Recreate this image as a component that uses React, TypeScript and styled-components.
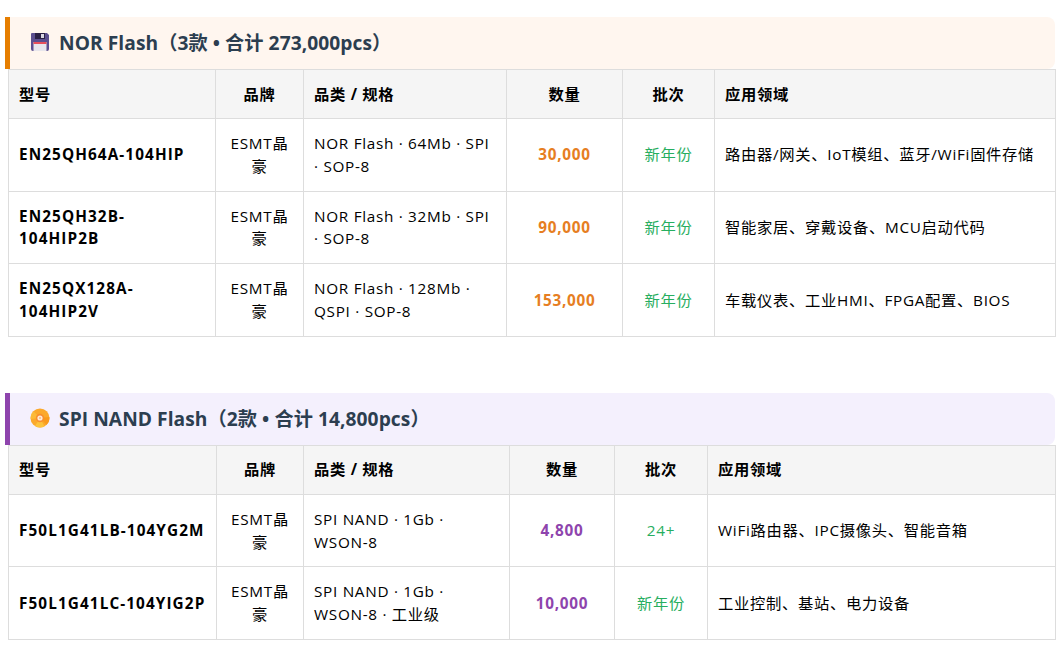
import type { ReactNode } from "react";
import styled, { createGlobalStyle } from "styled-components";

const GlobalStyle = createGlobalStyle`
    html, body {
        margin: 0;
        padding: 0;
        background: #fff;
    }
    body {
        font-family: "Open Sans", "Noto Sans CJK SC", sans-serif;
        color: #000;
    }
`;

const Page = styled.div`
    padding: 17px 5px 0 8px;
    width: 1060px;
    height: 657px;
    box-sizing: border-box;
    overflow: hidden;
`;

const Section = styled.section`
    margin-bottom: 56px;
`;

const Heading = styled.h3<{ $accent: string; $bg: string }>`
    display: flex;
    align-items: center;
    gap: 9px;
    margin: 0 0 0 -3px;
    height: 52px;
    padding: 0 0 2px 20px;
    box-sizing: border-box;
    border-left: 5px solid ${(p) => p.$accent};
    border-radius: 0 8px 8px 0;
    background: ${(p) => p.$bg};
    color: #2c3e50;
    font-size: 19.2px;
    font-weight: 700;
    letter-spacing: 0.06px;
`;

const Table = styled.table`
    width: 1047px;
    table-layout: fixed;
    border-collapse: collapse;
    font-size: 15.3px;
    line-height: 22.8px;
    letter-spacing: 0.7px;
`;

const Th = styled.th<{ $center?: boolean }>`
    height: 49px;
    padding: 0 10px;
    box-sizing: border-box;
    border: 1px solid #ddd;
    background: #f5f5f5;
    font-weight: 700;
    text-align: ${(p) => (p.$center ? "center" : "left")};
`;

const Td = styled.td<{ $center?: boolean }>`
    padding: 13px 10px;
    border: 1px solid #ddd;
    text-align: ${(p) => (p.$center ? "center" : "left")};
`;

const Model = styled(Td)`
    font-weight: 700;
    letter-spacing: 1.1px;
`;

const Qty = styled(Td)<{ $color: string }>`
    color: ${(p) => p.$color};
    font-weight: 700;
`;

const Batch = styled(Td)`
    color: #27ae60;
`;

function FloppyIcon() {
    return (
        <svg width="20" height="20" viewBox="0 0 20 20" aria-hidden="true">
            <path d="M2 1h15l2 2v14a2 2 0 0 1-2 2H3a2 2 0 0 1-2-2V2a1 1 0 0 1 1-1z" fill="#5c4f8f" />
            <rect x="5" y="1" width="10" height="6" fill="#2b2145" />
            <rect x="11" y="2" width="3" height="4" fill="#d9d6e2" />
            <rect x="3.5" y="10" width="13" height="9" fill="#e8e6ec" />
            <rect x="3.5" y="10" width="13" height="2" fill="#e8505b" />
        </svg>
    );
}

function DiscIcon() {
    return (
        <svg width="20" height="20" viewBox="0 0 20 20" aria-hidden="true">
            <circle cx="10" cy="10" r="9.5" fill="#fba92c" />
            <path d="M10 10L3.5 3.2A9.5 9.5 0 0 0 .6 11z" fill="#fcc23f" opacity="0.7" />
            <path d="M10 10l6.5 6.8A9.5 9.5 0 0 0 19.4 9z" fill="#f99a1c" />
            <path d="M10 10l-5 7.9A9.5 9.5 0 0 0 14.5 18.4z" fill="#fdc33c" />
            <circle cx="10" cy="10" r="4.2" fill="#f98f2e" />
            <circle cx="10" cy="10" r="2.6" fill="#ffe9d6" />
            <circle cx="10" cy="10" r="1" fill="#f8b878" />
        </svg>
    );
}

type Row = {
    model: ReactNode;
    spec: ReactNode;
    qty: string;
    batch: string;
    use: string;
};

const norRows: Row[] = [
    { model: "EN25QH64A-104HIP", spec: "NOR Flash · 64Mb · SPI · SOP-8", qty: "30,000", batch: "新年份", use: "路由器/网关、IoT模组、蓝牙/WiFi固件存储" },
    { model: <>EN25QH32B-<br />104HIP2B</>, spec: "NOR Flash · 32Mb · SPI · SOP-8", qty: "90,000", batch: "新年份", use: "智能家居、穿戴设备、MCU启动代码" },
    { model: "EN25QX128A-104HIP2V", spec: "NOR Flash · 128Mb · QSPI · SOP-8", qty: "153,000", batch: "新年份", use: "车载仪表、工业HMI、FPGA配置、BIOS" },
];

const nandRows: Row[] = [
    { model: "F50L1G41LB-104YG2M", spec: "SPI NAND · 1Gb · WSON-8", qty: "4,800", batch: "24+", use: "WiFi路由器、IPC摄像头、智能音箱" },
    { model: "F50L1G41LC-104YIG2P", spec: "SPI NAND · 1Gb · WSON-8 · 工业级", qty: "10,000", batch: "新年份", use: "工业控制、基站、电力设备" },
];

function Spec({ widths, rows, color }: { widths: number[]; rows: Row[]; color: string }) {
    return (
        <Table>
            <colgroup>
                {widths.map((w, i) => (
                    <col key={i} style={{ width: w }} />
                ))}
            </colgroup>
            <thead>
                <tr>
                    <Th>型号</Th>
                    <Th $center>品牌</Th>
                    <Th>品类 / 规格</Th>
                    <Th $center>数量</Th>
                    <Th $center>批次</Th>
                    <Th>应用领域</Th>
                </tr>
            </thead>
            <tbody>
                {rows.map((r, i) => (
                    <tr key={i}>
                        <Model>{r.model}</Model>
                        <Td $center>ESMT晶豪</Td>
                        <Td>{r.spec}</Td>
                        <Qty $center $color={color}>{r.qty}</Qty>
                        <Batch $center>{r.batch}</Batch>
                        <Td>{r.use}</Td>
                    </tr>
                ))}
            </tbody>
        </Table>
    );
}

export default function App() {
    return (
        <Page>
            <GlobalStyle />
            <Section>
                <Heading $accent="#e67e00" $bg="#fff6ef">
                    <FloppyIcon />
                    NOR Flash（3款 • 合计 273,000pcs）
                </Heading>
                <Spec widths={[207, 88, 203, 116, 92, 341]} rows={norRows} color="#e67e22" />
            </Section>
            <Section>
                <Heading $accent="#8e44ad" $bg="#f4f0fd">
                    <DiscIcon />
                    SPI NAND Flash（2款 • 合计 14,800pcs）
                </Heading>
                <Spec widths={[208, 87, 206, 105, 93, 348]} rows={nandRows} color="#8e44ad" />
            </Section>
        </Page>
    );
}
